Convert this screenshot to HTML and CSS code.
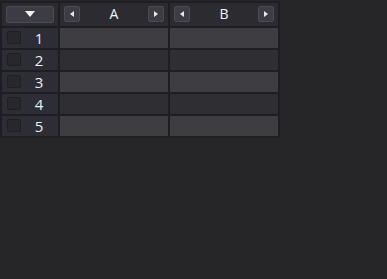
FILE: index.html
```html
<!DOCTYPE html>
<html>
<head>
<meta charset="utf-8">
<link rel="stylesheet" href="styles.css">
</head>
<body>
<div class="grid">
  <div class="hcell corner">
    <div class="dropbtn"><svg width="10" height="6" viewBox="0 0 10 6"><polygon points="0,0 10,0 5,6" fill="#f2f2f2"/></svg></div>
  </div>
  <div class="hcell col">
    <div class="sbtn"><svg width="4" height="6" viewBox="0 0 4 6"><polygon points="4,0 4,6 0,3" fill="#e8e8e8"/></svg></div>
    <span class="title">A</span>
    <div class="sbtn"><svg width="4" height="6" viewBox="0 0 4 6"><polygon points="0,0 0,6 4,3" fill="#e8e8e8"/></svg></div>
  </div>
  <div class="hcell col">
    <div class="sbtn"><svg width="4" height="6" viewBox="0 0 4 6"><polygon points="4,0 4,6 0,3" fill="#e8e8e8"/></svg></div>
    <span class="title">B</span>
    <div class="sbtn"><svg width="4" height="6" viewBox="0 0 4 6"><polygon points="0,0 0,6 4,3" fill="#e8e8e8"/></svg></div>
  </div>

  <div class="rcell"><span class="cb"></span><span class="num">1</span></div>
  <div class="cell light"></div><div class="cell light"></div>
  <div class="rcell"><span class="cb"></span><span class="num">2</span></div>
  <div class="cell dark"></div><div class="cell dark"></div>
  <div class="rcell"><span class="cb"></span><span class="num">3</span></div>
  <div class="cell light"></div><div class="cell light"></div>
  <div class="rcell"><span class="cb"></span><span class="num">4</span></div>
  <div class="cell dark"></div><div class="cell dark"></div>
  <div class="rcell"><span class="cb"></span><span class="num">5</span></div>
  <div class="cell light"></div><div class="cell light"></div>
</div>
</body>
</html>
```

FILE: styles.css
```css
html, body {
  margin: 0;
  padding: 0;
  background: #262629;
  width: 387px;
  height: 279px;
  overflow: hidden;
  font-family: "Open Sans", "DejaVu Sans", sans-serif;
  color: #ececec;
}
.grid {
  display: inline-grid;
  grid-template-columns: 56px 108px 108px;
  grid-template-rows: 23px repeat(5, 20px);
  gap: 2px;
  padding: 2px;
  background: #1e1e22;
}
.hcell {
  background: #2b2b31;
  display: flex;
  align-items: center;
}
.corner {
  justify-content: center;
  padding-top: 1px;
  box-sizing: border-box;
  align-items: flex-start;
}
.dropbtn {
  margin-top: 2px;
  width: 48px;
  height: 17px;
  box-sizing: border-box;
  background: #3c3c45;
  border: 1px solid #4b4b55;
  border-radius: 2px;
  display: flex;
  align-items: center;
  justify-content: center;
}
.col {
  padding: 0 4px;
  justify-content: space-between;
  align-items: flex-start;
  padding-top: 3px;
  box-sizing: border-box;
}
.sbtn {
  width: 16px;
  height: 16px;
  box-sizing: border-box;
  background: #3c3c45;
  border: 1px solid #4b4b55;
  border-radius: 2px;
  display: flex;
  align-items: center;
  justify-content: center;
}
.title {
  font-size: 14px;
  line-height: 16px;
  color: #f4f4f4;
}
.rcell {
  background: #2d2d35;
  display: flex;
  align-items: center;
  padding-left: 5px;
}
.cb {
  width: 14px;
  height: 13px;
  box-sizing: border-box;
  background: #28282c;
  border: 1px solid #1f1f23;
  border-radius: 2px;
}
.num {
  flex: 1;
  text-align: center;
  font-size: 15px;
  line-height: 20px;
  padding-right: 1px;
  color: #eeeeee;
}
.cell.light { background: #3d3d42; }
.cell.dark { background: #2e2e33; }
```
